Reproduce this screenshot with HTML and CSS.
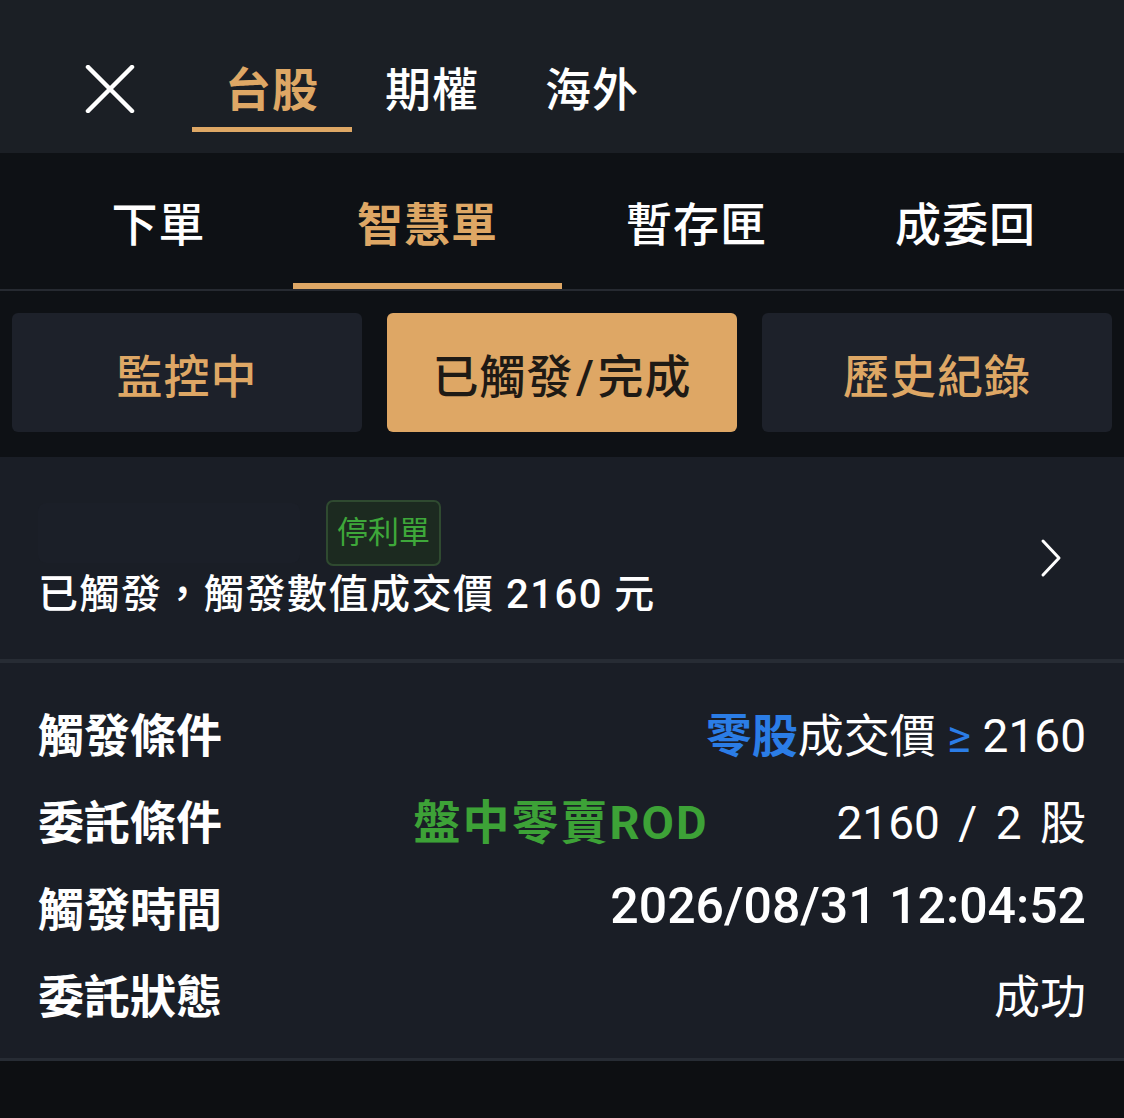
FILE: index.html
```html
<!DOCTYPE html>
<html lang="zh-Hant">
<head>
    <meta charset="UTF-8">
    <meta name="viewport" content="width=device-width, initial-scale=1.0">
    <title>智慧單</title>
    <link rel="stylesheet" href="styles.css">
</head>
<body>

    <!-- Market tabs -->
    <header class="topbar">
        <button class="close-btn" aria-label="關閉">
            <svg width="50" height="48" viewBox="0 0 50 48">
                <path d="M3 2 L47 46 M47 2 L3 46" stroke="#fff" stroke-width="4.5" stroke-linecap="round"/>
            </svg>
        </button>
        <nav class="market-tabs">
            <a class="market-tab active">台股</a>
            <a class="market-tab">期權</a>
            <a class="market-tab">海外</a>
        </nav>
    </header>

    <!-- Order tabs -->
    <nav class="order-tabs">
        <a class="order-tab">下單</a>
        <a class="order-tab active">智慧單</a>
        <a class="order-tab">暫存匣</a>
        <a class="order-tab">成委回</a>
    </nav>

    <!-- Status filter -->
    <div class="segments">
        <button class="segment">監控中</button>
        <button class="segment active">已觸發 / 完成</button>
        <button class="segment">歷史紀錄</button>
    </div>

    <!-- Order summary -->
    <section class="order-card">
        <div class="order-info">
            <div class="order-head">
                <span class="stock-name"></span>
                <span class="badge">停利單</span>
            </div>
            <p class="order-msg">已觸發，觸發數值成交價 2160 元</p>
        </div>
        <svg class="chevron" width="22" height="40" viewBox="0 0 22 40">
            <path d="M3 3 L19 20 L3 37" fill="none" stroke="#fff" stroke-width="3" stroke-linecap="round" stroke-linejoin="round"/>
        </svg>
    </section>

    <!-- Order details -->
    <section class="details">
        <div class="row">
            <span class="label">觸發條件</span>
            <span class="value"><b class="blue">零股</b>成交價 <span class="blue">≥</span> 2160</span>
        </div>
        <div class="row">
            <span class="label">委託條件</span>
            <span class="value"><b class="green">盤中零賣ROD</b><span class="qty">2160 / 2 股</span></span>
        </div>
        <div class="row">
            <span class="label">觸發時間</span>
            <span class="value time">2026/08/31 12:04:52</span>
        </div>
        <div class="row">
            <span class="label">委託狀態</span>
            <span class="value">成功</span>
        </div>
    </section>

    <div class="bottom"></div>

</body>
</html>
```

FILE: styles.css
```css
* {
    margin: 0;
    padding: 0;
    box-sizing: border-box;
}

body {
    font-family: 'Roboto', 'Noto Sans CJK TC', sans-serif;
    background-color: #0d0f12;
    color: #fff;
    width: 1124px;
    height: 1118px;
    overflow: hidden;
}

a {
    text-decoration: none;
    color: inherit;
}

/* Top bar */
.topbar {
    display: flex;
    align-items: flex-start;
    height: 153px;
    padding: 48px 0 0 85px;
    background-color: #1b1f25;
}

.close-btn {
    border: none;
    background: none;
    margin-top: 17px;
    width: 50px;
    height: 48px;
    margin-right: 57px;
}

.market-tabs {
    display: flex;
}

.market-tab {
    width: 160px;
    height: 84px;
    padding-bottom: 3px;
    display: flex;
    align-items: center;
    justify-content: center;
    font-size: 46px;
    font-weight: 500;
    border-bottom: 5px solid transparent;
    letter-spacing: 1px;
}

.market-tab.active {
    color: #dea765;
    font-weight: 700;
    border-bottom-color: #dea765;
}

/* Order tabs */
.order-tabs {
    display: flex;
    padding: 0 24px;
    background-color: #0e1115;
    border-bottom: 2px solid #262a31;
}

.order-tab {
    flex: 1;
    height: 136px;
    padding-top: 5px;
    display: flex;
    align-items: center;
    justify-content: center;
    font-size: 46px;
    font-weight: 500;
    border-bottom: 6px solid transparent;
    letter-spacing: 1px;
}

.order-tab.active {
    color: #dea765;
    font-weight: 700;
    border-bottom-color: #dea765;
}

/* Segments */
.segments {
    display: flex;
    gap: 25px;
    padding: 22px 12px 25px;
    background-color: #0e1115;
}

.segment {
    flex: 1;
    height: 119px;
    border: none;
    border-radius: 6px;
    background-color: #1d212a;
    color: #dea765;
    font-family: inherit;
    font-size: 46px;
    font-weight: 500;
    letter-spacing: 1px;
    word-spacing: -10px;
}

.segment.active {
    background-color: #dea765;
    color: #1e1a15;
}

/* Order card */
.order-card {
    display: flex;
    align-items: center;
    justify-content: space-between;
    height: 206px;
    padding: 0 62px 0 38px;
    background-color: #1a1e26;
    border-bottom: 4px solid #272c34;
}

.order-head {
    display: flex;
    align-items: center;
    gap: 26px;
    margin-top: 6px;
    margin-bottom: 2px;
}

.stock-name {
    width: 262px;
    height: 60px;
    border-radius: 8px;
    background-color: #1b1f28;
}

.badge {
    display: inline-block;
    padding: 6px 9px;
    font-size: 31px;
    line-height: 50px;
    color: #3ea83a;
    background-color: #1c2a20;
    border: 2px solid #2f4a30;
    border-radius: 7px;
}

.order-msg {
    font-size: 40px;
    font-weight: 500;
    line-height: 54px;
    letter-spacing: 1.5px;
}

/* Details */
.details {
    padding: 25px 38px 22px;
    background-color: #1a1e26;
    border-bottom: 3px solid #272c34;
}

.row {
    display: flex;
    align-items: center;
    justify-content: space-between;
    height: 87px;
}

.label {
    font-size: 46px;
    font-weight: 700;
}

.value {
    font-size: 46px;
    font-weight: 400;
}

.value b {
    font-weight: 700;
}

.blue {
    color: #2b7de6;
}

.green {
    color: #3da237;
    font-size: 47px;
    letter-spacing: 2px;
}

.qty {
    margin-left: 128px;
    word-spacing: 7px;
}

.time {
    font-size: 50px;
    font-weight: 500;
}

.bottom {
    height: 60px;
    background-color: #0d0f12;
}
```
